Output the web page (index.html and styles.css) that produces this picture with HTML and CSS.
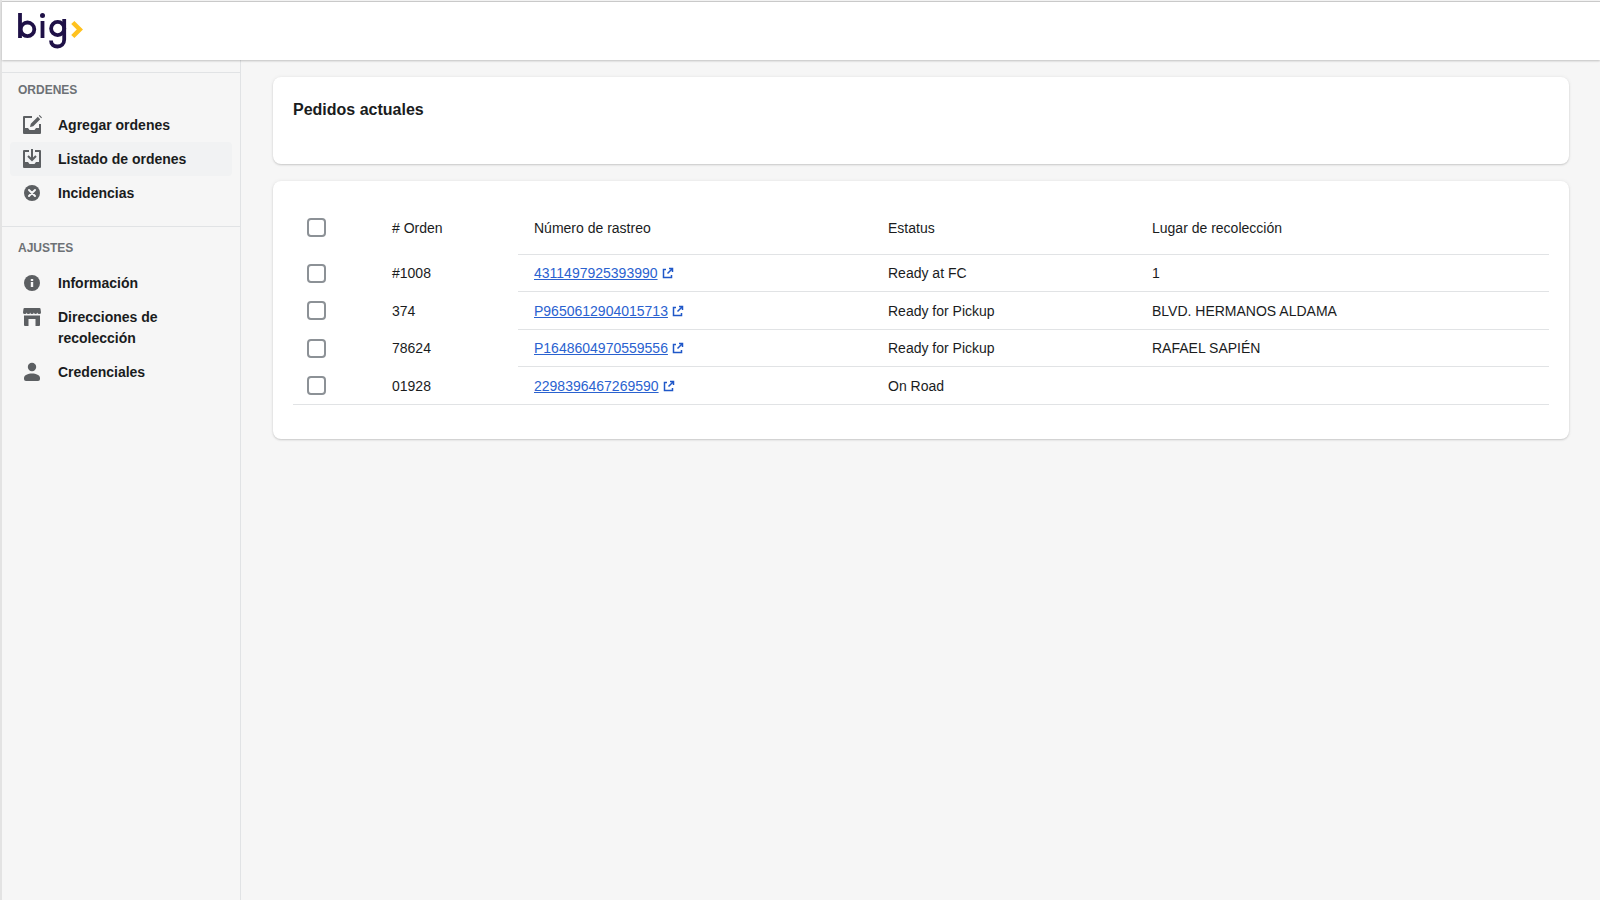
FILE: index.html
```html
<!DOCTYPE html>
<html lang="es">
<head>
<meta charset="utf-8">
<title>Pedidos actuales</title>
<meta name="viewport" content="width=device-width, initial-scale=1">
<link rel="stylesheet" href="styles.css">
</head>
<body>
<div class="app">
  <header class="topbar">
    <a class="logo" href="#" aria-label="big">
      <svg viewBox="0 1 66 37" width="66" height="37" fill="none" aria-hidden="true">
        <g stroke="#1f1147" stroke-width="3.800">
          <path d="M3 1v25"/><circle cx="10.500" cy="17.300" r="6.800"/>
          <path d="M25.500 9v17"/><circle cx="40.700" cy="16.500" r="6.600"/>
          <path d="M47.200 7v20.500c0 4.500-3 7-6.700 7-3.800 0-6.500-2-6.500-6"/>
        </g>
        <circle cx="25.500" cy="3.500" r="2.500" fill="#1f1147"/>
        <path d="M55.800 10.500l7 7-7 7" stroke="#ffc220" stroke-width="4.500"/>
      </svg>
    </a>
  </header>
  <div class="body">
    <nav class="sidebar" aria-label="Principal">
      <section class="group">
        <h2 class="group-title">ORDENES</h2>
        <ul class="items">
          <li><a class="item" href="#">
            <svg class="icon" viewBox="0 0 20 20" aria-hidden="true"><path d="M2 1h8v2H3v10h3l1.500 2h5l1.500-2h3V9h2v9a1 1 0 0 1-1 1H2a1 1 0 0 1-1-1V2a1 1 0 0 1 1-1z"/><path d="M8 12l.8-3.200 7-7 2.400 2.400-7 7zM16.800.8l.8-.8L20 2.400l-.8.800z"/></svg>
            <span>Agregar ordenes</span></a></li>
          <li><a class="item active" href="#" aria-current="page">
            <svg class="icon" viewBox="0 0 20 20" aria-hidden="true"><path d="M2 1h5v2H3v10h3l1.500 2h5l1.500-2h3V3h-4V1h5a1 1 0 0 1 1 1v16a1 1 0 0 1-1 1H2a1 1 0 0 1-1-1V2a1 1 0 0 1 1-1z"/><path d="M9 0h2v8.500l2.300-2.200 1.400 1.400L10 12.400 5.300 7.700l1.400-1.400L9 8.500z"/></svg>
            <span>Listado de ordenes</span></a></li>
          <li><a class="item" href="#">
            <svg class="icon" viewBox="0 0 20 20" aria-hidden="true"><circle cx="10" cy="10" r="8"/><path d="M7 7l6 6M13 7l-6 6" fill="none" stroke="#f6f6f7" stroke-width="2" stroke-linecap="round"/></svg>
            <span>Incidencias</span></a></li>
        </ul>
      </section>
      <section class="group">
        <h2 class="group-title">AJUSTES</h2>
        <ul class="items">
          <li><a class="item" href="#">
            <svg class="icon" viewBox="0 0 20 20" aria-hidden="true"><circle cx="10" cy="10" r="8"/><path d="M8.800 9h2.400v5H8.800zM8.800 6h2.400v2H8.800z" fill="#f6f6f7"/></svg>
            <span>Información</span></a></li>
          <li><a class="item" href="#">
            <svg class="icon" viewBox="0 0 20 20" aria-hidden="true"><path d="M2.500 1h15a1 1 0 0 1 1 .8L19 5.500a1.800 1.500 0 0 1-3.600 0 1.800 1.500 0 0 1-3.600 0 1.800 1.500 0 0 1-3.600 0 1.800 1.500 0 0 1-3.600 0 1.800 1.500 0 0 1-3.600 0L1.500 1.800a1 1 0 0 1 1-.8z"/><path d="M2 8.500h16V18a1 1 0 0 1-1 1h-3.500v-7h-7v7H3a1 1 0 0 1-1-1z"/></svg>
            <span>Direcciones de recolección</span></a></li>
          <li><a class="item" href="#">
            <svg class="icon" viewBox="0 0 20 20" aria-hidden="true"><circle cx="10" cy="5" r="4.200"/><path d="M2 16c0-3 4-4.500 8-4.500s8 1.500 8 4.500v1a2 2 0 0 1-2 2H4a2 2 0 0 1-2-2z"/></svg>
            <span>Credenciales</span></a></li>
        </ul>
      </section>
    </nav>
    <main class="main">
      <section class="card heading-card"><h1 class="heading">Pedidos actuales</h1></section>
      <section class="card table-card">
        <table class="orders">
          <colgroup><col class="c-check"><col class="c-order"><col class="c-track"><col class="c-status"><col class="c-place"></colgroup>
          <thead>
            <tr><th><input type="checkbox" class="check" aria-label="Seleccionar todos"></th><th scope="col"># Orden</th><th scope="col">Número de rastreo</th><th scope="col">Estatus</th><th scope="col">Lugar de recolección</th></tr>
          </thead>
          <tbody>
            <tr><td><input type="checkbox" class="check" aria-label="Seleccionar #1008"></td><td>#1008</td><td><a class="track" href="#"><span>4311497925393990</span><svg class="ext" viewBox="0 0 12 12" aria-hidden="true"><path d="M4 2.500H1.500v8h8V8M7 1.500h3.500V5M10.500 1.500l-5 5"/></svg></a></td><td>Ready at FC</td><td>1</td></tr>
            <tr><td><input type="checkbox" class="check" aria-label="Seleccionar 374"></td><td>374</td><td><a class="track" href="#"><span>P9650612904015713</span><svg class="ext" viewBox="0 0 12 12" aria-hidden="true"><path d="M4 2.500H1.500v8h8V8M7 1.500h3.500V5M10.500 1.500l-5 5"/></svg></a></td><td>Ready for Pickup</td><td>BLVD. HERMANOS ALDAMA</td></tr>
            <tr><td><input type="checkbox" class="check" aria-label="Seleccionar 78624"></td><td>78624</td><td><a class="track" href="#"><span>P1648604970559556</span><svg class="ext" viewBox="0 0 12 12" aria-hidden="true"><path d="M4 2.500H1.500v8h8V8M7 1.500h3.500V5M10.500 1.500l-5 5"/></svg></a></td><td>Ready for Pickup</td><td>RAFAEL SAPIÉN</td></tr>
            <tr><td><input type="checkbox" class="check" aria-label="Seleccionar 01928"></td><td>01928</td><td><a class="track" href="#"><span>2298396467269590</span><svg class="ext" viewBox="0 0 12 12" aria-hidden="true"><path d="M4 2.500H1.500v8h8V8M7 1.500h3.500V5M10.500 1.500l-5 5"/></svg></a></td><td>On Road</td><td></td></tr>
          </tbody>
        </table>
      </section>
    </main>
  </div>
</div>
</body>
</html>
```

FILE: styles.css
```css
* { box-sizing: border-box; }
body {
  margin: 0;
  background: #f6f6f6;
  color: #1a1c1d;
  font: 14px/20px "Liberation Sans", Arial, sans-serif;
}
.app {
  display: flex;
  flex-direction: column;
  min-height: 100vh;
  padding-top: 1px;
  border-left: 2px solid #e3e3e3;
}
.topbar {
  display: flex;
  align-items: center;
  height: 59px;
  padding: 0 15px;
  background: #fff;
  border-top: 1px solid #c9c9c9;
  box-shadow: 0 1px 2px rgba(0, 0, 0, .22);
  z-index: 1;
}
.logo { display: block; height: 37px; }
.body { display: flex; flex: 1; }
.sidebar {
  flex: 0 0 239px;
  padding-top: 12px;
  border-right: 1px solid #e1e3e5;
}
.group {
  padding: 8px 8px 16px;
  border-top: 1px solid #e1e3e5;
}
.group + .group { padding-top: 12px; }
.group-title {
  margin: 0 0 8px;
  padding: 0 8px;
  color: #6d7175;
  font-size: 12px;
  line-height: 19px;
}
.items { margin: 0; padding: 0; list-style: none; }
.item {
  display: flex;
  gap: 16px;
  padding: 7px 12px 6px;
  border-radius: 4px;
  color: #1a1c1d;
  font-weight: 700;
  line-height: 21px;
  text-decoration: none;
}
.active { background: #f1f2f3; }
.icon { flex: none; width: 20px; height: 20px; fill: #5c5f62; }
.main { flex: 1; min-width: 0; padding: 17px 31px 17px 32px; }
.card {
  background: #fff;
  border-radius: 8px;
  box-shadow: 0 0 4px rgba(23, 24, 24, .06), 0 1px 2px rgba(0, 0, 0, .16);
}
.heading-card { min-height: 87px; padding: 21px 20px; }
.heading { margin: 0; font-size: 16px; line-height: 24px; }
.table-card { margin-top: 17px; padding: 20px 20px 34px; }
.orders {
  width: 100%;
  border-collapse: separate;
  border-spacing: 0;
  table-layout: fixed;
}
.c-check { width: 83px; }
.c-order { width: 142px; }
.c-track { width: 354px; }
.c-status { width: 264px; }
.orders th, .orders td {
  height: 37px;
  padding: 0 16px;
  font-weight: 400;
  text-align: left;
  vertical-align: middle;
  border-bottom: 1px solid #e1e3e5;
}
.orders tr:nth-child(even) td { height: 38px; }
.orders th { height: 54px; }
.orders td:first-child, .orders th:first-child { padding: 0 14px; }
.orders tr:not(:last-child) td:nth-child(-n+2),
.orders th:nth-child(-n+2) { border-bottom-color: transparent; }
.check {
  display: block;
  appearance: none;
  width: 19px;
  height: 19px;
  margin: 0;
  background: #fff;
  border: 2px solid #8c9196;
  border-radius: 4px;
}
.check:checked { background: #2c6ecb; }
.track {
  display: inline-flex;
  align-items: center;
  gap: 4px;
  color: #2a62d0;
  text-decoration: none;
}
.track span { text-decoration: underline; }
.ext { width: 12px; height: 12px; fill: none; stroke: #1f57c8; stroke-width: 1.500; }
```
